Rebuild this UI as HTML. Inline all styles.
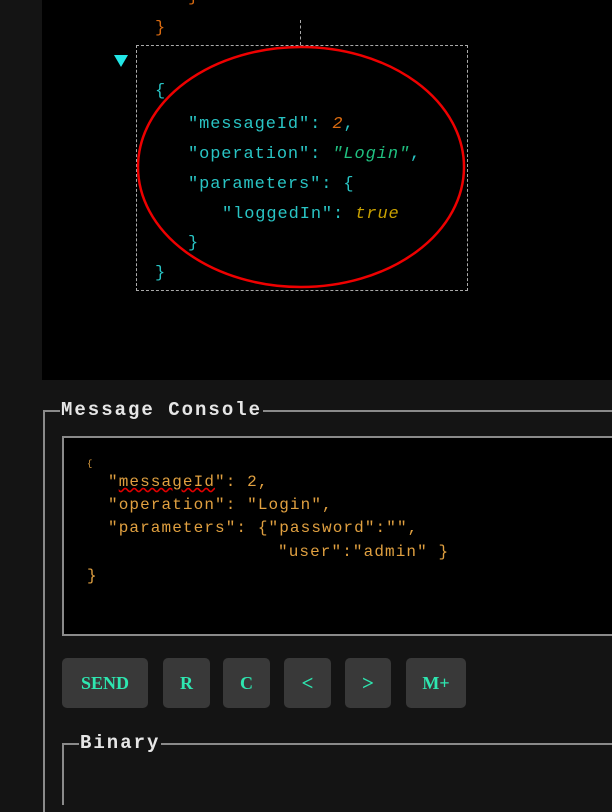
<!DOCTYPE html>
<html><head><meta charset="utf-8"><style>
html,body{margin:0;padding:0;}
body{width:612px;height:774px;background:#141414;position:relative;overflow:hidden;font-family:"Liberation Mono",monospace;}
.abs{position:absolute;white-space:pre;}
.code{font-size:17px;letter-spacing:0.9px;line-height:20px;}
.c{color:#29c4c4}.o{color:#d86a10}.g{color:#20c080;font-style:italic}.y{color:#c8a000;font-style:italic}
.m{font-size:16px;letter-spacing:1.1px;color:#e0a040;line-height:18px;font-family:"Liberation Mono",monospace;}
.btn{position:absolute;top:658px;height:50px;background:#393939;border-radius:5px;color:#2ee6b0;font:bold 18px "Liberation Serif",serif;display:flex;align-items:center;justify-content:center;}
.leg{position:absolute;background:#141414;color:#e6e6e6;font:bold 19px "Liberation Mono",monospace;letter-spacing:2px;padding:0 1px;line-height:22px;}
</style></head><body>
<div class="abs" style="left:42px;top:0;width:570px;height:380px;background:#000"></div>
<div class="abs code o" style="left:188px;top:-12px">}</div>
<div class="abs code o" style="left:155px;top:19px">}</div>
<div class="abs" style="left:300px;top:20px;height:25px;border-left:1px dashed #aaa"></div>
<div class="abs" style="left:136px;top:45px;width:330px;height:244px;border:1px dashed #aaa"></div>
<svg class="abs" style="left:113px;top:54px" width="16" height="14"><polygon points="1,1 15,1 8,13" fill="#22e6e6"/></svg>
<div class="abs code c" style="left:155px;top:82px">{</div>
<div class="abs code" style="left:188px;top:115px"><span class="c">"messageId": </span><span class="o" style="font-style:italic">2</span><span class="c">,</span></div>
<div class="abs code" style="left:188px;top:145px"><span class="c">"operation": </span><span class="g">"Login"</span><span class="c">,</span></div>
<div class="abs code c" style="left:188px;top:175px">"parameters": {</div>
<div class="abs code" style="left:222px;top:205px"><span class="c">"loggedIn": </span><span class="y">true</span></div>
<div class="abs code c" style="left:188px;top:234px">}</div>
<div class="abs code c" style="left:155px;top:264px">}</div>
<svg class="abs" style="left:0;top:0" width="612" height="380"><ellipse cx="301" cy="167" rx="163" ry="120" fill="none" stroke="#ee0000" stroke-width="2.5"/></svg>

<div class="abs" style="left:43px;top:410px;width:580px;height:400px;border:2px solid #8a8a8a;border-right:none;border-bottom:none"></div>
<div class="leg" style="left:60px;top:399px">Message Console</div>
<div class="abs" style="left:62px;top:436px;width:560px;height:196px;background:#000;border:2px solid #8a8a8a;border-right:none"></div>
<div class="abs m" style="left:87px;top:455px;font-size:9px">{</div>
<div class="abs m" style="left:108px;top:473px">"<span style="text-decoration:underline wavy #e00000">messageId</span>": 2,</div>
<div class="abs m" style="left:108px;top:496px">"operation": "Login",</div>
<div class="abs m" style="left:108px;top:519px">"parameters": {"password":"",</div>
<div class="abs m" style="left:278px;top:543px">"user":"admin" }</div>
<div class="abs m" style="left:87px;top:567px">}</div>

<div class="btn" style="left:62px;width:86px">SEND</div>
<div class="btn" style="left:163px;width:47px">R</div>
<div class="btn" style="left:223px;width:47px">C</div>
<div class="btn" style="left:284px;width:47px;font-size:21px">&lt;</div>
<div class="btn" style="left:345px;width:46px;font-size:21px">&gt;</div>
<div class="btn" style="left:406px;width:60px">M+</div>

<div class="abs" style="left:62px;top:743px;width:560px;height:60px;border:2px solid #8a8a8a;border-right:none;border-bottom:none"></div>
<div class="leg" style="left:79px;top:732px">Binary</div>
</body></html>
